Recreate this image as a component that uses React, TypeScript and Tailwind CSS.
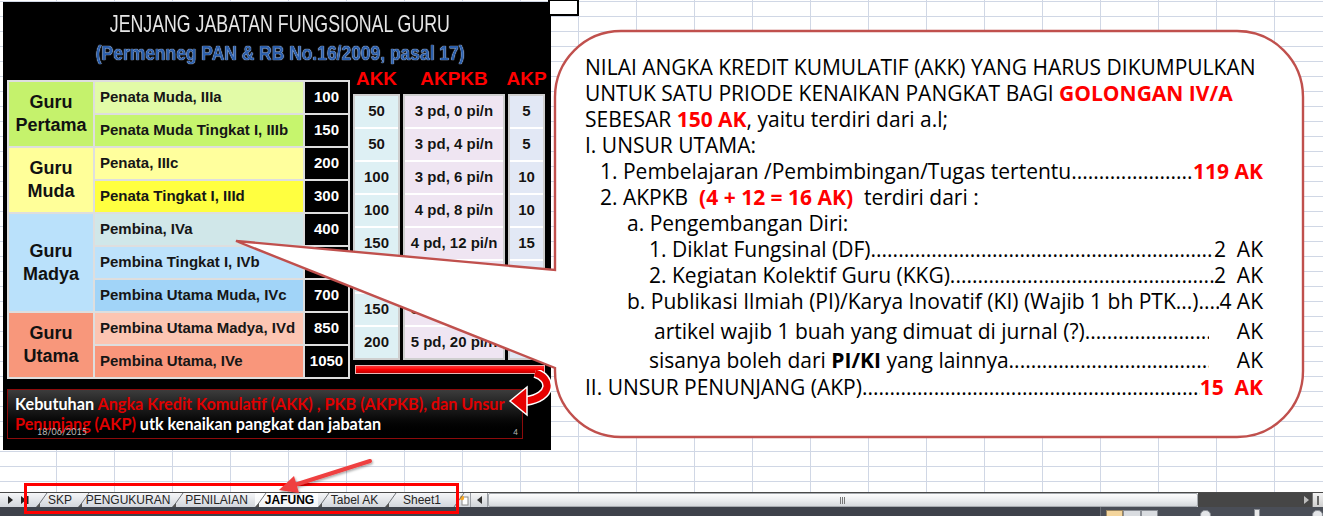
import React from "react";

const leftRows = [
  { name: "Penata Muda, IIIa", val: "100", bg: "bg-[#e2fba7]" },
  { name: "Penata Muda Tingkat I, IIIb", val: "150", bg: "bg-[#c6f56d]" },
  { name: "Penata, IIIc", val: "200", bg: "bg-[#ffff9d]" },
  { name: "Penata Tingkat I, IIId", val: "300", bg: "bg-[#ffff40]" },
  { name: "Pembina, IVa", val: "400", bg: "bg-[#d0e7e9]" },
  { name: "Pembina Tingkat I, IVb", val: "550", bg: "bg-[#bde2fb]" },
  { name: "Pembina Utama Muda, IVc", val: "700", bg: "bg-[#a1d4f8]" },
  { name: "Pembina Utama Madya, IVd", val: "850", bg: "bg-[#fcc5b2]" },
  { name: "Pembina Utama, IVe", val: "1050", bg: "bg-[#f9967b]" },
];

const cats = [
  { l1: "Guru", l2: "Pertama", cls: "row-span-2 row-start-1 bg-[#c5f26c]" },
  { l1: "Guru", l2: "Muda", cls: "row-span-2 row-start-3 bg-[#ffff99]" },
  { l1: "Guru", l2: "Madya", cls: "row-span-3 row-start-5 bg-[#bae1fb]" },
  { l1: "Guru", l2: "Utama", cls: "row-span-2 row-start-8 bg-[#f8977b]" },
];

const rowStart = [
  "row-start-1",
  "row-start-2",
  "row-start-3",
  "row-start-4",
  "row-start-5",
  "row-start-6",
  "row-start-7",
  "row-start-8",
  "row-start-9",
];

const akk = ["50", "50", "100", "100", "150", "150", "150", "200"];
const akpkb = [
  "3 pd, 0 pi/n",
  "3 pd, 4 pi/n",
  "3 pd, 6 pi/n",
  "4 pd, 8 pi/n",
  "4 pd, 12 pi/n",
  "4 pd, 12 pi/n",
  "5 pd, 14 pi/n",
  "5 pd, 20 pi/n",
];
const akp = ["5", "5", "10", "10", "15", "15", "15", "20"];

function RightCol({ items, bg }: { items: string[]; bg: string }) {
  return (
    <div className="flex flex-col gap-[2px] border-2 border-[#cfcfcf] bg-white">
      {items.map((t, i) => (
        <div
          key={i}
          className={`flex h-[31px] items-center justify-center whitespace-nowrap text-[15px] font-bold text-[#141414] [text-shadow:0_0_1px_#fff] ${bg}`}
        >
          {t}
        </div>
      ))}
    </div>
  );
}

function Picture() {
  return (
    <div className="absolute left-[3px] top-[2px] flex h-[448px] w-[548px] flex-col bg-black">
      <div className="mt-[9px] flex h-[26px] justify-center pl-[5px]">
        <span className="inline-block scale-x-[0.74] whitespace-nowrap text-[24px] leading-[26px] text-[#e6e6e6] [text-shadow:1px_1px_1px_#000]">
          JENJANG JABATAN FUNGSIONAL GURU
        </span>
      </div>
      <div className="mt-[4px] flex h-[24px] justify-center pl-[6px]">
        <span className="inline-block scale-x-[0.83] whitespace-nowrap text-[21px] font-bold leading-[24px] text-[#2c5fab] [text-shadow:0_0_1px_#d8e6ff,0_0_1px_#d8e6ff]">
          (Permenneg PAN &amp; RB No.16/2009, pasal 17)
        </span>
      </div>
      <div className="mt-[1px] flex items-start">
        <div className="ml-[4px] mt-[14px] grid w-[343px] grid-cols-[84px_208px_43px] grid-rows-[repeat(9,31px)] gap-[2px] border-2 border-[#dedede] bg-[#dedede]">
          {cats.map((c) => (
            <div
              key={c.l2}
              className={`col-start-1 flex flex-col items-center justify-center text-center text-[18px] font-bold leading-[23px] text-[#111] ${c.cls}`}
            >
              <span>{c.l1}</span>
              <span>{c.l2}</span>
            </div>
          ))}
          {leftRows.map((r, i) => (
            <React.Fragment key={r.name}>
              <div
                className={`col-start-2 flex items-center whitespace-nowrap pl-[5px] text-[15px] font-bold text-[#161616] ${rowStart[i]} ${r.bg}`}
              >
                {r.name}
              </div>
              <div
                className={`col-start-3 flex items-center justify-center bg-black text-[15px] font-bold text-white [text-shadow:0_0_2px_#000] ${rowStart[i]}`}
              >
                {r.val}
              </div>
            </React.Fragment>
          ))}
        </div>
        <div className="ml-[3px] flex w-[192px] flex-col">
          <div className="grid h-[26px] grid-cols-[47px_102px_37px] gap-x-[3px] text-[19px] font-bold leading-[26px] text-[#ff0000]">
            <span className="flex justify-center">AKK</span>
            <span className="flex justify-center">AKPKB</span>
            <span className="flex justify-center">AKP</span>
          </div>
          <div className="mt-[2px] grid grid-cols-[47px_102px_37px] gap-x-[3px]">
            <RightCol items={akk} bg="bg-[#def0f4]" />
            <RightCol items={akpkb} bg="bg-[#efe5f2]" />
            <RightCol items={akp} bg="bg-[#e2e8f5]" />
          </div>
          <div className="ml-[2px] mt-[5px] h-[9px] w-[190px] border border-[#e8b4b4] bg-gradient-to-b from-[#ff3030] via-[#ff0000] to-[#c00000]" />
        </div>
      </div>
      <div className="relative ml-[4px] mt-[10px] h-[50px] w-[516px] border border-[#8c0b0b] bg-gradient-to-b from-[#3c3c3c] via-[#121212] to-black px-[7px] pt-[4px] font-['Lato',sans-serif] text-[16.2px] font-bold leading-[20px] text-white">
        <div className="whitespace-nowrap">
          Kebutuhan{" "}
          <span className="text-[#e00000]">
            Angka Kredit Komulatif (AKK) , PKB (AKPKB), dan Unsur
          </span>
        </div>
        <div className="whitespace-nowrap">
          <span className="text-[#e00000]">Penunjang (AKP)</span> utk kenaikan pangkat dan jabatan
        </div>
        <span className="absolute left-[29px] top-[37px] text-[9px] font-normal leading-[10px] text-[#b8b8b8]">
          18/06/2015
        </span>
        <span className="absolute right-[4px] top-[38px] text-[8px] font-normal leading-[8px] text-[#b8b8b8]">
          4
        </span>
      </div>
      <svg
        className="absolute left-[502px] top-[368px]"
        width="48"
        height="48"
        viewBox="0 0 48 48"
      >
        <path d="M30 3 C47 8 48 27 21 31" fill="none" stroke="#fff" strokeWidth="10" />
        <path d="M30 3 C47 8 48 27 21 31" fill="none" stroke="#e60000" strokeWidth="7" />
        <polygon points="5,31 22,17 22,45" fill="#e60000" stroke="#fff" strokeWidth="1.5" />
      </svg>
    </div>
  );
}

const DOTS =
  "........................................................................................................................................";

function Leader({
  indent,
  label,
  value,
  extra = "",
}: {
  indent: string;
  label: React.ReactNode;
  value: React.ReactNode;
  extra?: string;
}) {
  return (
    <div className={`flex h-[26px] items-center whitespace-pre ${indent} ${extra}`}>
      <span className="shrink-0">{label}</span>
      <span className="min-w-0 flex-1 overflow-hidden">{DOTS}</span>
      <span className="shrink-0">{value}</span>
    </div>
  );
}

function Callout() {
  return (
    <>
      <svg className="pointer-events-none absolute left-0 top-0" width="1323" height="492">
        <path
          d="M621 31 H1237 A66 66 0 0 1 1303 97 V371 A66 66 0 0 1 1237 437 H621 A66 66 0 0 1 555 371 V368 L236 241 L555 270 V97 A66 66 0 0 1 621 31 Z"
          fill="#ffffff"
          stroke="#c0504d"
          strokeWidth="2.4"
        />
      </svg>
      <div className="absolute left-[585px] top-[55px] w-[678px] font-['Open_Sans',sans-serif] text-[21px] text-black">
        <div className="flex h-[26px] items-center whitespace-pre">
          NILAI ANGKA KREDIT KUMULATIF (AKK) YANG HARUS DIKUMPULKAN
        </div>
        <div className="flex h-[26px] items-center whitespace-pre">
          UNTUK SATU PRIODE KENAIKAN PANGKAT BAGI{" "}
          <span className="font-bold text-[#ff0000]">GOLONGAN IV/A</span>
        </div>
        <div className="flex h-[26px] items-center whitespace-pre">
          SEBESAR <span className="font-bold text-[#ff0000]">150 AK</span>, yaitu terdiri dari a.l;
        </div>
        <div className="flex h-[26px] items-center whitespace-pre">I. UNSUR UTAMA:</div>
        <Leader
          indent="pl-[15px]"
          label="1. Pembelajaran /Pembimbingan/Tugas tertentu"
          value={<span className="font-bold text-[#ff0000]">119 AK</span>}
        />
        <div className="flex h-[26px] items-center whitespace-pre pl-[15px]">
          2. AKPKB  <span className="font-bold text-[#ff0000]">(4 + 12 = 16 AK)</span>  terdiri dari :
        </div>
        <div className="flex h-[26px] items-center whitespace-pre pl-[42px]">a. Pengembangan Diri:</div>
        <Leader indent="pl-[64px]" label="1. Diklat Fungsinal (DF)" value={"2  AK"} />
        <Leader indent="pl-[64px]" label="2. Kegiatan Kolektif Guru (KKG)" value={"2  AK"} />
        <Leader
          indent="pl-[42px]"
          label="b. Publikasi Ilmiah (PI)/Karya Inovatif (KI) (Wajib 1 bh PTK...)"
          value={"4 AK"}
        />
        <Leader
          indent="pl-[69px]"
          extra="mt-[4px]"
          label="artikel wajib 1 buah yang dimuat di jurnal (?)"
          value={<span className="pl-[28px]">AK</span>}
        />
        <Leader
          indent="pl-[64px]"
          extra="mt-[3px]"
          label={
            <>
              sisanya boleh dari <b>PI/KI</b> yang lainnya.. 
            </>
          }
          value={<span className="pl-[28px]">AK</span>}
        />
        <Leader
          indent="pl-0"
          extra="mt-[1px]"
          label="II. UNSUR PENUNJANG (AKP)"
          value={<span className="font-bold text-[#ff0000]">15  AK</span>}
        />
      </div>
    </>
  );
}

const tabs = [
  { label: "SKP", w: "w-[42px]", active: false },
  { label: "PENGUKURAN", w: "w-[94px]", active: false },
  { label: "PENILAIAN", w: "w-[83px]", active: false },
  { label: "JAFUNG", w: "w-[63px]", active: true },
  { label: "Tabel AK", w: "w-[67px]", active: false },
  { label: "Sheet1", w: "w-[68px]", active: false },
];

function TabStrip() {
  return (
    <div className="flex h-[15px] shrink-0 border-t border-[#4a4a4a] bg-gradient-to-b from-[#f5f6f8] to-[#d2d6dc] font-['Liberation_Sans',Arial,sans-serif] text-[12px] leading-[14px] text-[#262626]">
      <div className="flex w-[36px] items-center gap-[8px] pl-[8px]">
        <svg width="5" height="8" viewBox="0 0 5 8">
          <polygon points="0,0 5,4 0,8" fill="#222" />
        </svg>
        <svg width="8" height="8" viewBox="0 0 8 8">
          <polygon points="0,0 5,4 0,8" fill="#222" />
          <rect x="6" y="0" width="1.5" height="8" fill="#222" />
        </svg>
      </div>
      {tabs.map((t) => (
        <div
          key={t.label}
          className={`relative flex items-center justify-center whitespace-nowrap ${t.w} ${
            t.active ? "bg-gradient-to-b from-white to-[#f1f3f6] font-bold text-black" : ""
          }`}
        >
          <svg className="absolute left-0 top-0" width="12" height="14" viewBox="0 0 12 14">
            <line x1="1" y1="14" x2="11" y2="0" stroke="#6f7379" strokeWidth="1" />
            <polygon points="0,14 4,14 4,10" fill="#555" />
          </svg>
          <span className="pl-[6px]">{t.label}</span>
        </div>
      ))}
      <div className="relative flex w-[17px] items-center justify-center">
        <svg className="absolute left-0 top-0" width="12" height="14" viewBox="0 0 12 14">
          <line x1="1" y1="14" x2="11" y2="0" stroke="#6f7379" strokeWidth="1" />
        </svg>
        <svg width="10" height="11" viewBox="0 0 10 11" className="ml-[4px]">
          <rect x="3" y="2" width="6" height="8" fill="#fff" stroke="#8a8a8a" strokeWidth="1" />
          <circle cx="3" cy="3" r="2.2" fill="#f6a623" />
        </svg>
      </div>
      <div className="flex w-[18px] items-center justify-center border-x border-[#9a9ea4] bg-gradient-to-b from-[#f7f7f7] to-[#cfd3d8]">
        <svg width="5" height="8" viewBox="0 0 5 8">
          <polygon points="5,0 0,4 5,8" fill="#333" />
        </svg>
      </div>
      <div className="flex flex-1 items-center justify-center rounded-[2px] border border-[#a7abb0] bg-gradient-to-b from-[#fdfdfd] via-[#eceef0] to-[#d6d9dd]">
        <svg width="6" height="7" viewBox="0 0 6 7">
          <line x1="0.5" y1="0" x2="0.5" y2="7" stroke="#777" />
          <line x1="2.5" y1="0" x2="2.5" y2="7" stroke="#777" />
          <line x1="4.5" y1="0" x2="4.5" y2="7" stroke="#777" />
        </svg>
      </div>
      <div className="flex w-[114px] items-center justify-end bg-[#464646] pr-[3px]">
        <svg width="5" height="8" viewBox="0 0 5 8">
          <polygon points="0,0 5,4 0,8" fill="#bdbdbd" />
        </svg>
      </div>
      <div className="flex w-[11px] items-center justify-center border-l border-[#777] bg-gradient-to-b from-[#f2f2f2] to-[#cfcfcf]">
        <div className="h-[9px] w-[2px] border-x border-[#666]" />
      </div>
    </div>
  );
}

function StatusBar() {
  return (
    <div className="flex h-[9px] shrink-0 bg-[#3e424b]">
      <div className="flex-1" />
      <div className="flex w-[223px] items-start border-l border-[#6a6e76] bg-[#4a4e57] pl-[5px] pt-[3px]">
        <div className="h-[8px] w-[19px] border border-[#9b8660] bg-[#f4d59c]" />
        <div className="h-[8px] w-[19px] border border-[#8a8e95] bg-[#d9dce0]" />
        <div className="h-[8px] w-[19px] border border-[#8a8e95] bg-[#d9dce0]" />
        <div className="ml-[42px] h-[10px] w-[12px] rounded-full border border-[#8a8e95] bg-[#e3e5e8]" />
        <div className="ml-[43px] mt-[-1px] h-[8px] w-[6px] border border-[#8a8e95] bg-[#e8e8e8]" />
        <div className="ml-[52px] h-[10px] w-[12px] rounded-full border border-[#8a8e95] bg-[#e3e5e8]" />
      </div>
    </div>
  );
}

export default function App() {
  return (
    <div className="relative flex h-[516px] w-[1323px] flex-col overflow-hidden bg-white font-['Liberation_Sans',Arial,sans-serif]">
      <div className="relative h-[492px] w-full shrink-0 bg-white [background-image:linear-gradient(to_right,#d0d7e5_1px,transparent_1px),linear-gradient(to_bottom,#d0d7e5_1px,transparent_1px)] [background-size:58px_15px] [background-position:-2px_1px]">
        <Picture />
        <Callout />
        <div className="absolute left-[548px] top-[-1px] h-[17px] w-[31px] border-2 border-black bg-white" />
      </div>
      <TabStrip />
      <StatusBar />
      <div className="pointer-events-none absolute left-[24px] top-[483px] h-[31px] w-[435px] border-[3px] border-[#ff0000]" />
      <svg className="pointer-events-none absolute left-0 top-0" width="1323" height="516">
        <defs>
          <filter id="sh" x="-20%" y="-50%" width="140%" height="200%">
            <feDropShadow dx="1" dy="1.5" stdDeviation="1" floodColor="#000" floodOpacity="0.35" />
          </filter>
        </defs>
        <g filter="url(#sh)">
          <line x1="370" y1="461" x2="296" y2="484.5" stroke="#ef3f3f" strokeWidth="4" strokeLinecap="round" />
          <polygon points="279,490 299,493 294,476" fill="#ef3f3f" />
        </g>
      </svg>
    </div>
  );
}
